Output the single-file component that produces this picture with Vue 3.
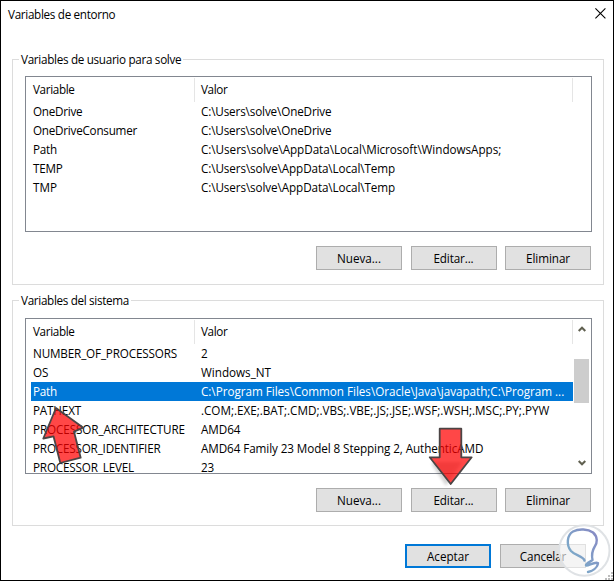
<script setup>
const userVars = [
  { name: 'OneDrive', nw: 49.3, value: 'C:\\Users\\solve\\OneDrive', vw: 130.5 },
  { name: 'OneDriveConsumer', nw: 104, value: 'C:\\Users\\solve\\OneDrive', vw: 130.5 },
  { name: 'Path', nw: 24, value: 'C:\\Users\\solve\\AppData\\Local\\Microsoft\\WindowsApps;', vw: 300.2 },
  { name: 'TEMP', nw: 29.7, value: 'C:\\Users\\solve\\AppData\\Local\\Temp', vw: 194 },
  { name: 'TMP', nw: 24, value: 'C:\\Users\\solve\\AppData\\Local\\Temp', vw: 194 },
]
const systemVars = [
  { name: 'NUMBER_OF_PROCESSORS', nw: 144, value: '2', vw: 7 },
  { name: 'OS', nw: 15.5, value: 'Windows_NT', vw: 70 },
  { name: 'Path', nw: 24, value: 'C:\\Program Files\\Common Files\\Oracle\\Java\\javapath;C:\\Program ...', vw: 363.2, selected: true },
  { name: 'PATHEXT', nw: 48, value: '.COM;.EXE;.BAT;.CMD;.VBS;.VBE;.JS;.JSE;.WSF;.WSH;.MSC;.PY;.PYW', vw: 348.2 },
  { name: 'PROCESSOR_ARCHITECTURE', nw: 152, value: 'AMD64', vw: 39.5 },
  { name: 'PROCESSOR_IDENTIFIER', nw: 127.5, value: 'AMD64 Family 23 Model 8 Stepping 2, AuthenticAMD', vw: 282.3 },
  { name: 'PROCESSOR_LEVEL', nw: 101, value: '23', vw: 13 },
]
const groups = [
  { title: 'Variables de usuario para solve', tw: 160.3, rows: userVars, scroll: false },
  { title: 'Variables del sistema', tw: 108, rows: systemVars, scroll: true },
]
const actions = [
  { label: 'Nueva...', w: 44 },
  { label: 'Editar...', w: 40 },
  { label: 'Eliminar', w: 44 },
]

// Tracks a label so that it fills the given width.
const vFit = {
  mounted(el, { value }) {
    const natural = el.getBoundingClientRect().width
    el.style.letterSpacing = (value - natural) / el.textContent.length + 'px'
  },
}
</script>

<template>
  <div class="window">
    <header class="titlebar">
      <span v-fit="107.3" class="t">Variables de entorno</span>
      <svg class="close" width="11" height="11" viewBox="0 0 11 11"><path d="M.4.4l10 10M10.4.4l-10 10" /></svg>
    </header>

    <section v-for="g in groups" :key="g.title" class="group" :class="{ system: g.scroll }">
      <div class="legend"><i class="lead"></i><span v-fit="g.tw" class="t">{{ g.title }}</span><i class="rule"></i></div>
      <div class="body">
        <div class="list">
          <div class="table">
            <div class="head">
              <div class="name"><span v-fit="41.5" class="t">Variable</span></div>
              <div class="value"><span v-fit="26.5" class="t">Valor</span></div>
            </div>
            <div v-for="r in g.rows" :key="r.name" class="row" :class="{ selected: r.selected }">
              <div class="name"><span v-fit="r.nw" class="t">{{ r.name }}</span></div>
              <div class="value"><span v-fit="r.vw" class="t">{{ r.value }}</span></div>
            </div>
          </div>
          <div v-if="g.scroll" class="scrollbar">
            <svg width="8" height="6" viewBox="0 0 8 6"><path d="M.7 5L4 1.7 7.3 5" /></svg>
            <div class="thumb"></div>
            <svg width="8" height="6" viewBox="0 0 8 6"><path d="M.7 1L4 4.3 7.3 1" /></svg>
          </div>
        </div>
        <div class="actions">
          <button v-for="a in actions" :key="a.label" class="btn"><span v-fit="a.w" class="t">{{ a.label }}</span></button>
        </div>
      </div>
    </section>

    <footer class="footer">
      <button class="btn primary"><span v-fit="42" class="t">Aceptar</span></button>
      <button class="btn"><span v-fit="46.5" class="t">Cancelar</span></button>
    </footer>

    <svg class="overlay" width="614" height="581" viewBox="0 0 614 581">
      <defs>
        <linearGradient id="ink" x1="0" x2="1" y1="1" y2="0">
          <stop offset="0" stop-color="#78b4ca" />
          <stop offset="1" stop-color="#8888c4" />
        </linearGradient>
        <filter id="soft" x="-30%" y="-30%" width="160%" height="160%"><feGaussianBlur stdDeviation="1.5" /></filter>
      </defs>
      <g fill="#bdbdbd">
        <rect x="611" y="572" width="2" height="2" />
        <rect x="608" y="575" width="2" height="2" /><rect x="611" y="575" width="2" height="2" />
        <rect x="605" y="578" width="2" height="2" /><rect x="608" y="578" width="2" height="2" /><rect x="611" y="578" width="2" height="2" />
      </g>
      <path class="shadow" d="M432 462h30L446 486l-14-21z" />
      <path class="arrow" d="M56 408L83.3 427.7 74 431.7 80.7 457.7 60.3 463 53.5 436.3 43.3 438.5z" />
      <path class="arrow" d="M439.7 428.7h21.6v28.6h10.4L450.7 484l-21-26.7h10z" />
      <circle class="badge" cx="584.3" cy="550.5" r="25.2" />
      <path class="swirl" d="M584.5 560.5C583 556 575 555.5 571 551C566 545 567 535 573 531.5C579 528.5 588 529 593 532.5C598 537 597.5 543 594.5 547C592 551 591.5 555 592.5 560C590 562 585.5 563.5 586 565.5C588 566.5 594 561.5 598 563C597.5 568 592 571 588 572" />
    </svg>
  </div>
</template>

<style>
body { margin: 0; }
</style>

<style scoped>
.window {
  position: relative;
  box-sizing: border-box;
  width: 614px;
  height: 581px;
  border: 1px solid #000;
  background: #fff;
  color: #000;
  font: 11.7px/19px "Open Sans", "Noto Sans", sans-serif;
  overflow: hidden;
  display: flex;
  flex-direction: column;
}
.t { display: inline-block; white-space: nowrap; flex: none; }
.titlebar {
  box-sizing: border-box;
  display: flex;
  justify-content: space-between;
  height: 49px;
  padding: 4px 7px 0 7px;
}
.close { margin: 3px 0 0; fill: none; stroke: #000; stroke-width: 1.1; }
.group {
  display: flex;
  flex-direction: column;
  width: 592px;
  height: 235px;
  margin-left: 11px;
}
.group.system { margin-top: 6px; }
.legend { display: flex; height: 9px; }
.legend .t { height: 19px; margin: 0 2px; z-index: 1; }
.lead { width: 7px; height: 1px; margin-top: 9px; background: #dcdcdc; flex: none; }
.rule { flex: 1; height: 1px; margin-top: 9px; background: #dcdcdc; }
.body {
  flex: 1;
  box-sizing: border-box;
  border: 1px solid #dcdcdc;
  border-top: 0;
  padding: 18px 12px 0 12px;
}
.list {
  display: flex;
  box-sizing: border-box;
  width: 567px;
  height: 156px;
  margin-top: -1px;
  border: 1px solid #828790;
  overflow: hidden;
}
.system .list { margin-top: 0; }
.table { width: 547px; flex: none; padding-top: 1px; }
.head, .row { display: flex; }
.head { height: 24px; line-height: 23px; }
.head > div { border-right: 1px solid #e5e5e5; box-sizing: border-box; }
.name { box-sizing: border-box; flex: none; width: 169px; padding-left: 7px; }
.value { box-sizing: border-box; flex: 1; padding-left: 6px; }
.row { height: 19px; }
.row .name { width: 164px; margin-left: 5px; padding-left: 2px; }
.row.selected { color: #fff; background: #0078d7; margin-left: 5px; }
.row.selected .name { margin-left: 0; }
.scrollbar {
  display: flex;
  flex-direction: column;
  align-items: center;
  width: 17px;
  height: 154px;
  box-sizing: border-box;
  padding: 7px 0;
}
.scrollbar svg { fill: none; stroke: #606050; stroke-width: 2; }
.thumb { width: 15px; height: 44px; margin: 27px 0 57px; background: #cdcdcd; }
.actions { display: flex; justify-content: flex-end; gap: 8.5px; margin-top: 14px; }
.btn {
  display: flex;
  align-items: center;
  justify-content: center;
  box-sizing: border-box;
  width: 86px;
  height: 24px;
  padding: 0;
  border: 1px solid #adadad;
  border-radius: 0;
  background: #e1e1e1;
  color: #000;
  font: inherit;
}
.primary { border: 2px solid #0078d7; }
.footer { display: flex; gap: 9px; margin: 18px 0 0 404px; }
.overlay { position: absolute; left: -1px; top: -1px; pointer-events: none; }
.arrow { fill: #ff0000; fill-opacity: .72; stroke: #4b4545; stroke-width: 1.8; stroke-linejoin: round; }
.shadow { fill: #000; opacity: .16; filter: url(#soft); }
.badge { fill: #fff; fill-opacity: .62; stroke: #dfe2e5; stroke-width: 2; }
.swirl { fill: none; stroke: url(#ink); stroke-width: 2.4; stroke-linecap: round; stroke-linejoin: round; }
</style>
